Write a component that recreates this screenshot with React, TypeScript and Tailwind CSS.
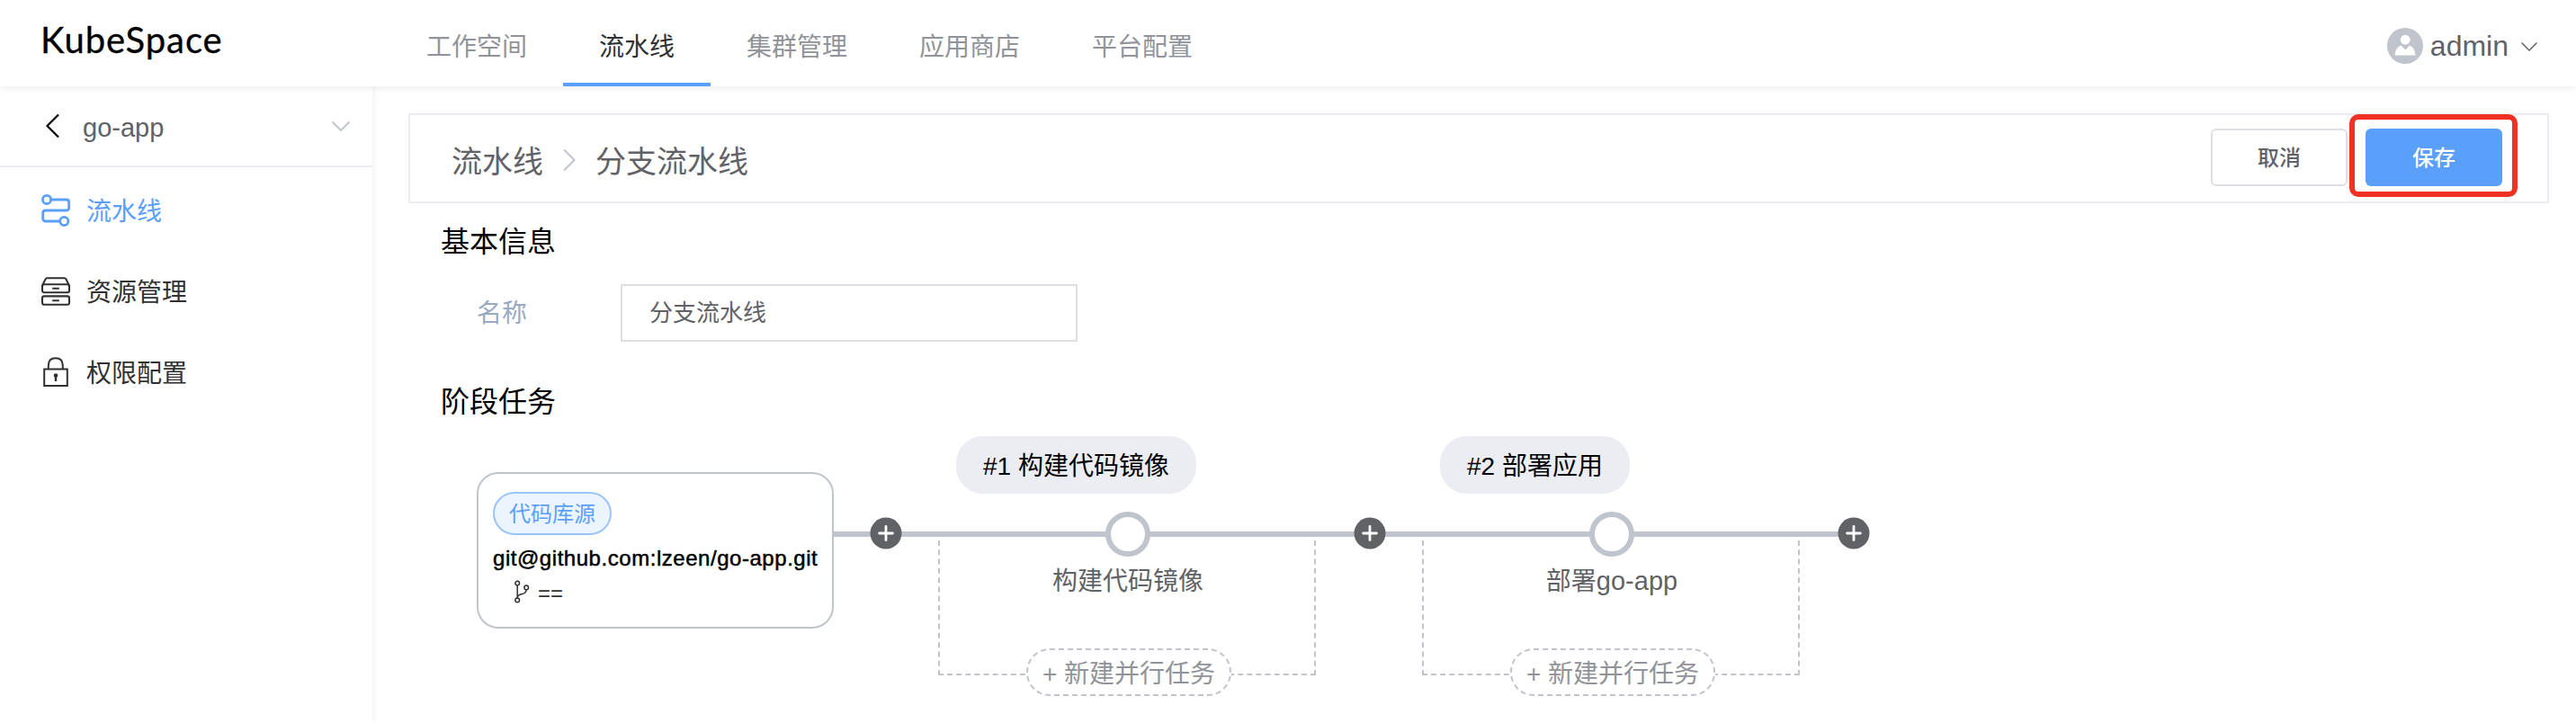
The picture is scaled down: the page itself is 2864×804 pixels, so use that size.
import type { ReactNode } from "react";

const navItems = ["工作空间", "流水线", "集群管理", "应用商店", "平台配置"];

function PipelineIcon() {
  return (
    <svg width="34" height="38" viewBox="0 0 34 38" fill="none" stroke="currentColor" strokeWidth="2.8">
      <circle cx="7" cy="7" r="4.6" />
      <circle cx="26.3" cy="31" r="4.6" />
      <path d="M11.8 7H28.7Q31.7 7 31.7 10V16Q31.7 19 28.7 19H5.7Q2.7 19 2.7 22V28Q2.7 31 5.7 31H21.5" />
    </svg>
  );
}

function ResourceIcon() {
  return (
    <svg width="34" height="34" viewBox="0 0 34 34" fill="none" stroke="currentColor" strokeWidth="2.1" strokeLinejoin="round">
      <path d="M2.3 10L5.6 3.4Q6.2 2.2 7.4 2.2H26.6Q27.8 2.2 28.4 3.4L31.7 10" />
      <rect x="2" y="9.2" width="30" height="9" rx="2" />
      <rect x="2" y="22.4" width="30" height="9.4" rx="2" />
      <path d="M13.2 13.8H20.8M13.2 27.2H20.8" />
    </svg>
  );
}

function LockIcon() {
  return (
    <svg width="34" height="36" viewBox="0 0 34 36" fill="none" stroke="currentColor" strokeWidth="2">
      <path d="M8.8 15V10.5Q8.8 2.2 16.8 2.2T24.8 10.5V15" />
      <path d="M4.2 14.6H29.8V33H4.2Z" />
      <circle cx="17" cy="21.6" r="2.3" fill="currentColor" stroke="none" />
      <path d="M17 22V28" strokeWidth="2.4" />
    </svg>
  );
}

function MenuItem({ icon, label, active }: { icon: ReactNode; label: string; active?: boolean }) {
  return (
    <li className={active ? "flex h-[90px] items-center pl-[45px] text-[#5a9ffa]" : "flex h-[90px] items-center pl-[45px] text-[#303133]"}>
      <span className="flex w-[34px] justify-center">{icon}</span>
      <span className="ml-[17px] pt-[3px] text-[28px]">{label}</span>
    </li>
  );
}

function PlusNode() {
  return (
    <svg width="36" height="36" viewBox="0 0 36 36" className="absolute -right-[18px] top-[90px] z-10">
      <circle cx="18" cy="18" r="17.5" fill="#606266" />
      <path d="M10.6 18H25.4M18 10.4V25.6" stroke="#fff" strokeWidth="2.8" strokeLinecap="round" />
    </svg>
  );
}

function Stage({ title, task }: { title: string; task: ReactNode }) {
  return (
    <div className="relative h-[290px] w-[538px]">
      <div className="absolute left-0 top-[106px] h-[6px] w-full bg-[#c0c4cc]" />
      <div className="absolute left-[58px] top-[116px] h-[150px] w-[420px] border-2 border-t-0 border-dashed border-[#c0c4cc]" />
      <div className="ml-[78px] flex h-16 w-fit items-center rounded-[30px] bg-[#ecedf3] px-[30px] pt-[3px] text-[28px] text-black">{title}</div>
      <div className="absolute left-[244px] top-[84px] size-[50px] rounded-full border-[6px] border-[#c0c4cc] bg-white" />
      <div className="absolute inset-x-0 top-[142px] text-center text-[28px] leading-[40px] text-[#606266]">{task}</div>
      <div className="absolute left-[156px] top-[236px] flex h-[53px] w-[228px] items-center justify-center whitespace-nowrap rounded-[26px] border-2 border-dashed border-[#c0c4cc] bg-white pt-[4px] text-[28px] text-[#909399]">
        + 新建并行任务
      </div>
      <PlusNode />
    </div>
  );
}

export default function App() {
  return (
    <div className="flex h-[804px] w-[2864px] flex-col overflow-hidden bg-white font-['Liberation_Sans','Noto_Sans_CJK_SC',sans-serif] leading-none">
      <header className="relative z-10 flex h-24 shrink-0 items-stretch bg-white shadow-[0_2px_8px_rgba(0,21,41,0.08)]">
        <div className="w-[434px] pl-[45px] pt-[20px] font-['Lato',sans-serif] text-[40px] leading-[48px] tracking-[0.95px] text-black [-webkit-text-stroke:0.3px_black]">
          KubeSpace
        </div>
        <nav className="flex">
          {navItems.map((item) => (
            <a
              key={item}
              className={
                item === "流水线"
                  ? "flex items-center border-b-4 border-[#5a9ffa] px-10 pt-[13px] text-[28px] text-[#303133]"
                  : "flex items-center border-b-4 border-transparent px-10 pt-[13px] text-[28px] text-[#909399]"
              }
            >
              {item}
            </a>
          ))}
        </nav>
        <div className="ml-auto flex items-center pr-[42px] pt-[6px] text-[32px] text-[#606266]">
          <svg width="40" height="40" viewBox="0 0 40 40">
            <circle cx="20" cy="20" r="20" fill="#c0c4cc" />
            <circle cx="20.2" cy="13.2" r="5.4" fill="#fff" />
            <path d="M8.5 30.5Q9 21.5 15.5 19.5L20.3 24.5L25 19.5Q31 21.5 31.5 30.5Z" fill="#fff" />
          </svg>
          <span className="ml-[8px]">admin</span>
          <svg className="ml-[13px] mt-[2px]" width="20" height="12" viewBox="0 0 20 12" fill="none" stroke="#606266" strokeWidth="1.5">
            <path d="M1.5 1.5L10 10L18.5 1.5" />
          </svg>
        </div>
      </header>

      <div className="flex min-h-0 flex-1">
        <aside className="w-[414px] shrink-0 bg-white shadow-[2px_0_6px_rgba(0,21,41,0.05)]">
          <div className="flex h-[90px] items-center border-b-2 border-[#ebecf2] pl-[50px] pr-[24px]">
            <svg width="17" height="28" viewBox="0 0 17 28" fill="none" stroke="#000" strokeWidth="2.2">
              <path d="M15 1.5L2.5 14L15 26.5" />
            </svg>
            <span className="ml-[25px] pt-[4px] text-[29px] text-[#606266]">go-app</span>
            <svg className="ml-auto" width="22" height="13" viewBox="0 0 22 13" fill="none" stroke="#c0c4cc" strokeWidth="1.8">
              <path d="M1.5 1.5L11 11L20.5 1.5" />
            </svg>
          </div>
          <ul className="mt-[3px]">
            <MenuItem icon={<PipelineIcon />} label="流水线" active />
            <MenuItem icon={<ResourceIcon />} label="资源管理" />
            <MenuItem icon={<LockIcon />} label="权限配置" />
          </ul>
        </aside>

        <main className="flex-1 pl-[40px] pr-[30px] pt-[30px]">
          <div className="flex h-[100px] items-center border-2 border-[#ebecf2] pl-[46px] pr-[33px] text-[34px] text-[#606266]">
            <span className="pt-[8px]">流水线</span>
            <svg className="mx-[21px] mt-[4px]" width="16" height="26" viewBox="0 0 16 26" fill="none" stroke="#c0c4cc" strokeWidth="2">
              <path d="M2 1.5L13.5 13L2 24.5" />
            </svg>
            <span className="pt-[8px]">分支流水线</span>
            <button className="mb-[2px] ml-auto h-16 w-[152px] rounded-md border-2 border-[#dcdfe6] bg-white pt-[2px] text-[24px] font-medium leading-none">
              取消
            </button>
            <div className="mb-[6px] ml-[2px] flex h-[92px] w-[187px] items-center rounded-[10px] border-6 border-[#ee3324] pl-[12px] pt-[4px]">
              <button className="h-16 w-[152px] rounded-md bg-[#5a9ffa] pt-[2px] text-[24px] font-medium leading-none text-white">保存</button>
            </div>
          </div>

          <section className="pl-[36px]">
            <h2 className="pt-[25px] text-[32px] leading-[36px] text-black">基本信息</h2>
            <div className="mt-[29px] flex h-16 items-center pl-[40px]">
              <label className="w-[160px] pt-[2px] text-[28px] text-[#99a9bf]">名称</label>
              <div className="flex h-16 w-[508px] items-center border-2 border-[#dcdfe6] pl-[30px] text-[26px] text-[#606266]">分支流水线</div>
            </div>
          </section>

          <section className="pl-[36px]">
            <h2 className="pt-[49px] text-[32px] leading-[36px] text-black">阶段任务</h2>
            <div className="mt-[20px] flex pl-[40px]">
              <div className="mt-[40px] h-[174px] w-[397px] shrink-0 rounded-[24px] border-2 border-[#c0c4cc] pl-[16px] pt-[20px]">
                <div className="flex h-12 w-[132px] items-center justify-center rounded-full border-2 border-[#9ac5fc] bg-[#ecf5ff] pt-[2px] text-[24px] text-[#5a9ffa]">
                  代码库源
                </div>
                <div className="mt-[12px] whitespace-nowrap text-[24px] leading-[28px] tracking-[0.54px] text-black [-webkit-text-stroke:0.5px_black]">
                  git@github.com:lzeen/go-app.git
                </div>
                <div className="mt-[10px] flex items-center pl-[24px] text-[24px] text-[#303133]">
                  <svg width="17" height="27" viewBox="0 0 17 27" fill="none" stroke="currentColor" strokeWidth="1.5">
                    <circle cx="3.2" cy="3.6" r="2.3" />
                    <circle cx="13.2" cy="8.4" r="2.3" />
                    <circle cx="3.2" cy="22.4" r="2.3" />
                    <path d="M3.2 6V20.2M13.2 10.8Q12.8 15 8.5 15.6Q4.2 16.2 3.2 19.5" />
                  </svg>
                  <span className="ml-[9px] pt-[3px]">==</span>
                </div>
              </div>
              <div className="relative w-[58px] shrink-0">
                <div className="absolute left-0 top-[106px] h-[6px] w-full bg-[#c0c4cc]" />
                <PlusNode />
              </div>
              <Stage title="#1 构建代码镜像" task="构建代码镜像" />
              <Stage
                title="#2 部署应用"
                task={
                  <>
                    部署<span className="text-[29px] leading-none">go-app</span>
                  </>
                }
              />
            </div>
          </section>
        </main>
      </div>
    </div>
  );
}
